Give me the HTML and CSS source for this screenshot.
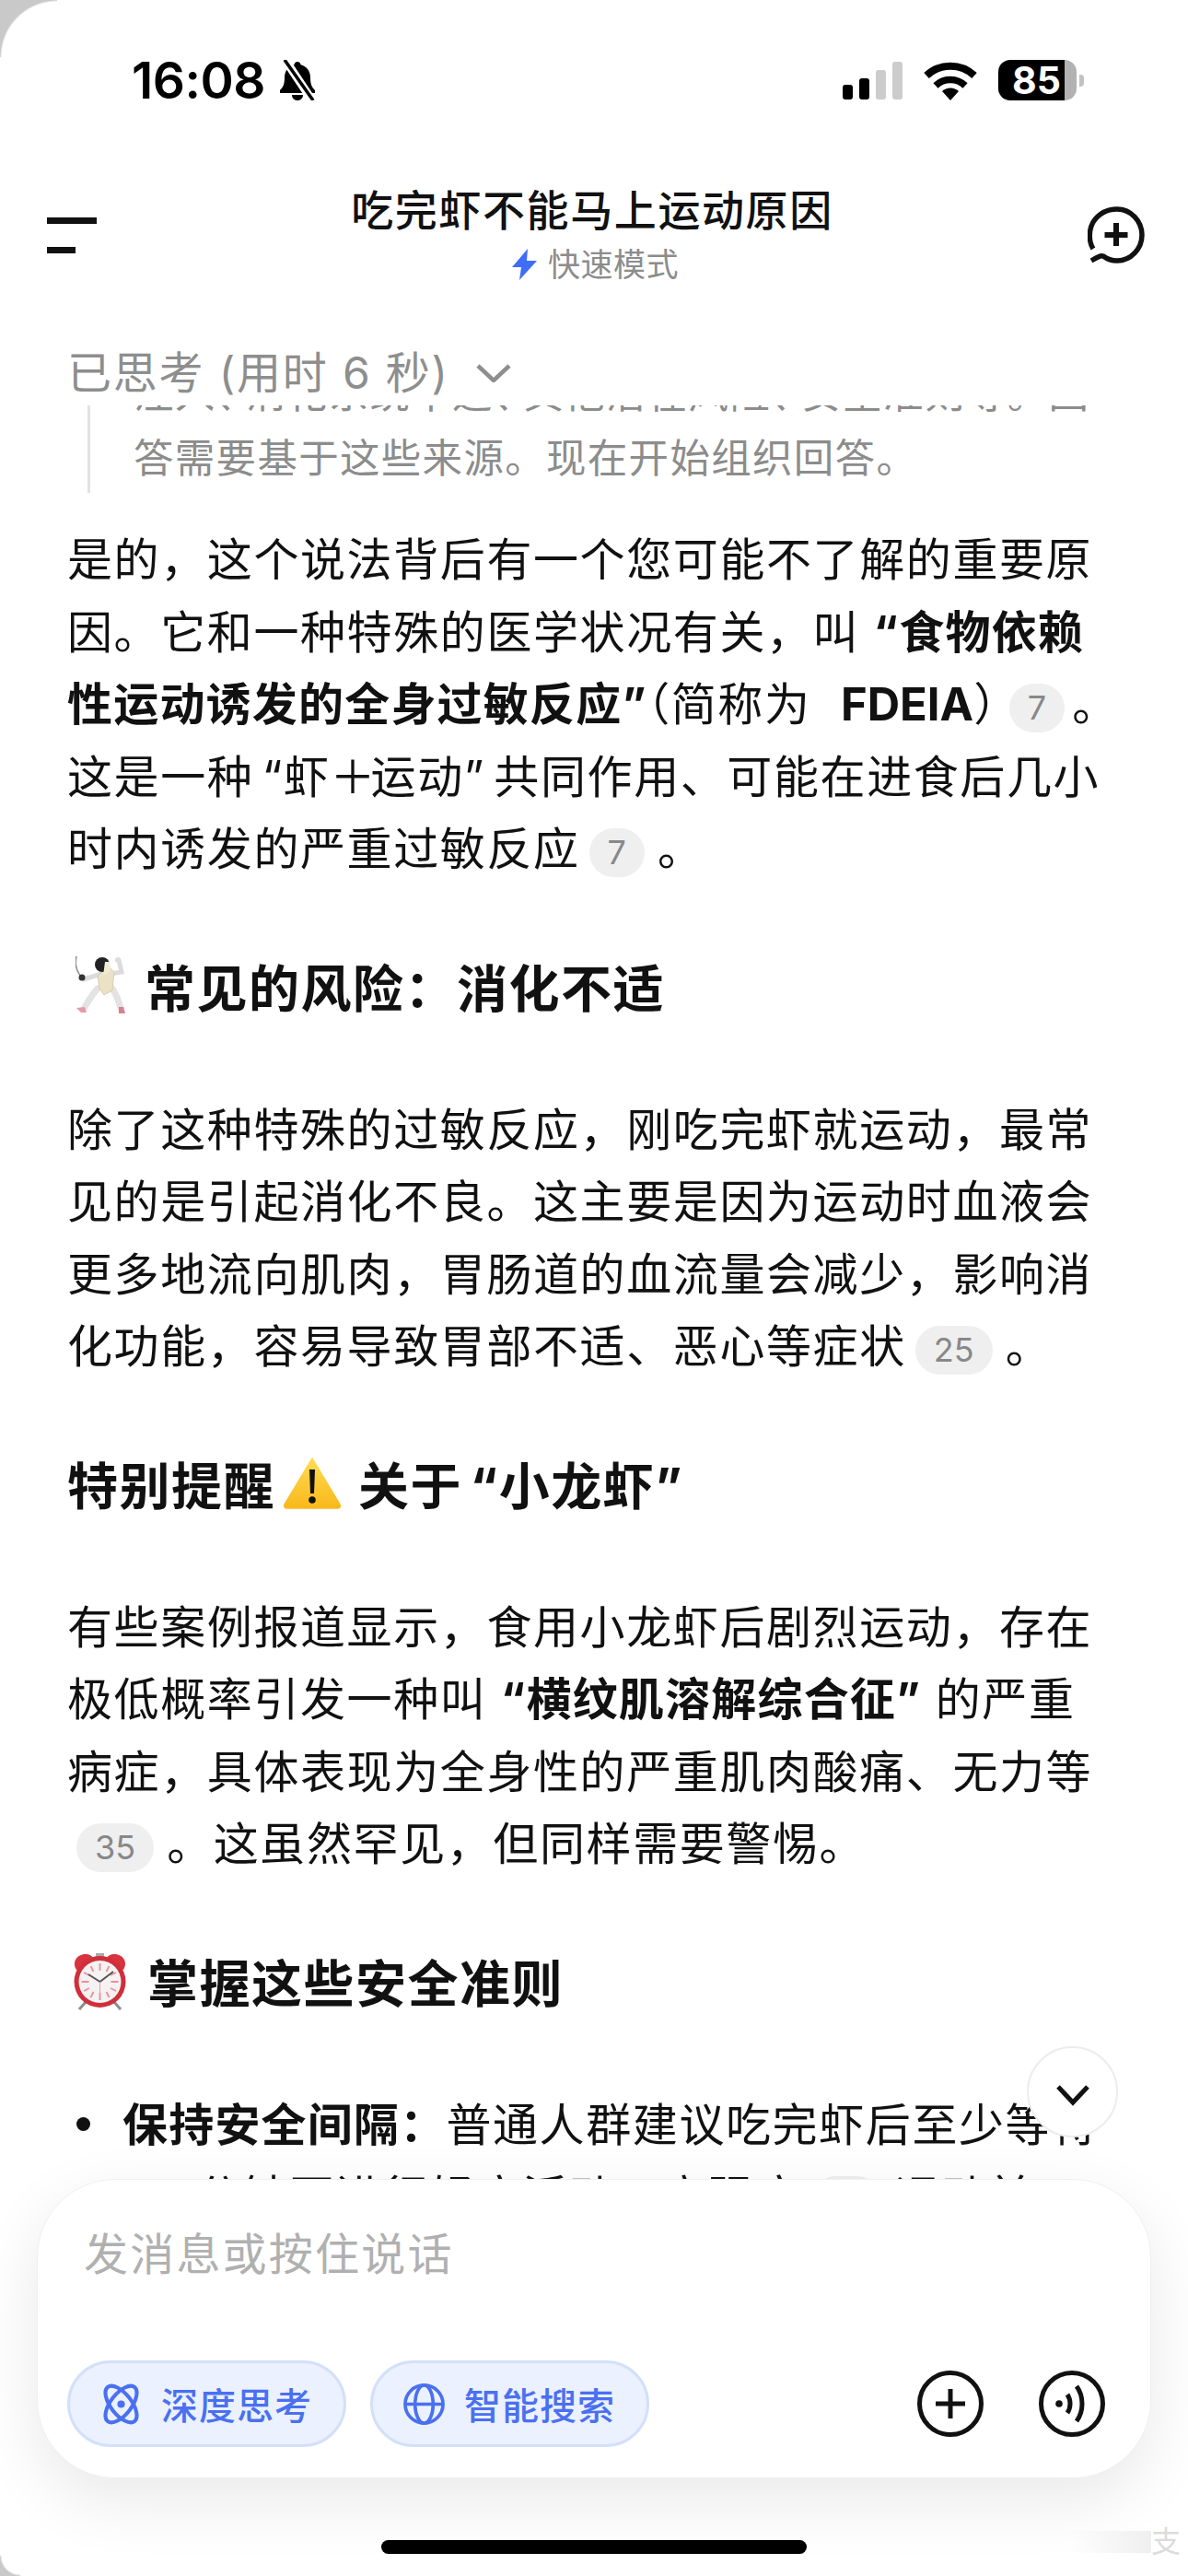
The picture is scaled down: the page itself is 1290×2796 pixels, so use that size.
FILE: index.html
```html
<!DOCTYPE html>
<html lang="zh-CN">
<head>
    <meta charset="UTF-8">
    <meta name="viewport" content="width=device-width, initial-scale=1.0">
    <title>吃完虾不能马上运动原因</title>
    <link rel="stylesheet" href="styles.css">
</head>
<body>
<div class="screen">

    <!-- status bar -->
    <div class="status">
        <div class="status-left">
            <span class="time">16:08</span>
            <svg class="bell" viewBox="0 0 44 44">
                <path d="M22 2c2 0 3.400 1.400 3.500 3.200C32 7 36 12 36 19c0 8 2 11 5 14v3H3v-3c3-3 5-6 5-14 0-7 4-12 10.500-13.800C18.600 3.400 20 2 22 2z" fill="#000"/>
                <path d="M16 38h12c0 3.500-2.500 6-6 6s-6-2.500-6-6z" fill="#000"/>
                <path d="M8 -1 40 47" stroke="#fff" stroke-width="9"/>
                <path d="M8 0 39 44" stroke="#000" stroke-width="3.500"/>
            </svg>
        </div>
        <div class="status-right">
            <div class="signal">
                <span class="bar bar-1"></span>
                <span class="bar bar-2"></span>
                <span class="bar bar-3"></span>
                <span class="bar bar-4"></span>
            </div>
            <svg class="wifi" viewBox="0 0 58 43">
                <path d="M3 16A38 38 0 0 1 55 16" fill="none" stroke="#000" stroke-width="8"/>
                <path d="M13 27A23 23 0 0 1 45 27" fill="none" stroke="#000" stroke-width="7.500"/>
                <path d="M29 43 20 33A13 13 0 0 1 38 33Z" fill="#000"/>
            </svg>
            <div class="battery">
                <div class="battery-body"><span class="battery-level">85</span></div>
                <span class="battery-nub"></span>
            </div>
        </div>
    </div>

    <!-- title bar -->
    <div class="topbar">
        <div class="menu-btn">
            <span class="menu-long"></span>
            <span class="menu-short"></span>
        </div>
        <div class="title-box">
            <div class="title">吃完虾不能马上运动原因</div>
            <div class="mode">
                <svg class="bolt" viewBox="0 0 27 34">
                    <path d="M17 0 0 20h10L8 34 27 13H16z" fill="#3f6df5"/>
                </svg>
                <span>快速模式</span>
            </div>
        </div>
        <svg class="new-chat" viewBox="0 0 62 62">
            <path d="M6 46C1 38 1 26 6 17 12 8 21 3 32 3c15 0 27 13 27 28S47 59 32 59c-7 0-11-2-15-5-3-1-8 2-13 5" fill="none" stroke="#111" stroke-width="5.500"/>
            <path d="M31 18v25M18.500 31h25" stroke="#111" stroke-width="6"/>
        </svg>
    </div>

    <!-- answer -->
    <div class="chat">
        <div class="think-head">
            <span>已思考 (用时 6 秒)</span>
            <svg class="think-arrow" viewBox="0 0 38 20">
                <path d="M2 2 19 18 36 2" fill="none" stroke="#8e8e8e" stroke-width="4.500"/>
            </svg>
        </div>
        <div class="think-quote">
            <p>注入<span class="comma">、</span>消化系统不适<span class="comma">、</span>其他潜在风险<span class="comma">、</span>安全准则等。回<br>答需要基于这些来源。现在开始组织回答。</p>
        </div>

        <p class="para first">是的，这个说法背后有一个您可能不了解的重要原<br>因。它和一种特殊的医学状况有关，叫 <b>“食物依赖<br>性运动诱发的全身过敏反应”</b>（简称为 <b class="latin">FDEIA</b>）<span class="cite cite-tight">7</span>。<br><span class="tight-line">这是一种 “虾<span class="plus">＋</span>运动” 共同作用、可能在进食后几小</span><br>时内诱发的严重过敏反应<span class="cite">7</span>。</p>

        <h2 class="heading">
            <svg class="emoji fencer" viewBox="0 0 55 64">
                <path d="M1 1C-1 9 1 17 6 23" fill="none" stroke="#8a8a8a" stroke-width="1.500"/>
                <path d="M9 26 28 20M38 20 50 18 47 5" fill="none" stroke="#dcdcdc" stroke-width="5" stroke-linecap="round"/>
                <path d="M24 36C18 42 14 50 10 56M40 36C44 42 47 50 49 57" fill="none" stroke="#e3e3e3" stroke-width="7" stroke-linecap="round"/>
                <path d="M24 22 36 12 42 18 40 38 31 43 26 36z" fill="#ebe2c6" stroke="#cfc6a8" stroke-width=".8"/>
                <circle cx="29" cy="10" r="8" fill="#222"/>
                <path d="M32 7h5l1 10-8 5z" fill="#f0ead6"/>
                <circle cx="7" cy="24" r="3.500" fill="#333"/>
                <circle cx="46" cy="5" r="3" fill="#ddd"/>
                <path d="M1 57 10 56 12 62 6 62z" fill="#e39aa8"/>
                <path d="M47 56 52 56 54 63 47 63z" fill="#d9808f"/>
            </svg>
            <span>常见的风险：消化不适</span>
        </h2>

        <p class="para">除了这种特殊的过敏反应，刚吃完虾就运动，最常<br>见的是引起消化不良。这主要是因为运动时血液会<br>更多地流向肌肉，胃肠道的血流量会减少，影响消<br>化功能，容易导致胃部不适、恶心等症状<span class="cite">25</span>。</p>

        <h2 class="heading">
            <span>特别提醒</span>
            <svg class="emoji warning" viewBox="0 0 64 57">
                <defs>
                    <linearGradient id="warnFill" x1="0" y1="0" x2="0" y2="1">
                        <stop offset="0" stop-color="#ffdc52"/>
                        <stop offset="1" stop-color="#f9b81c"/>
                    </linearGradient>
                </defs>
                <path d="M32 2 62 52c1 2 0 4-3 4H5c-3 0-4-2-3-4z" fill="url(#warnFill)" stroke="url(#warnFill)" stroke-width="1.500" stroke-linejoin="round"/>
                <path d="M29 14h6l-1 26h-4z" fill="#111"/>
                <circle cx="32" cy="47" r="3.800" fill="#111"/>
            </svg>
            <span>关于 “小龙虾”</span>
        </h2>

        <p class="para">有些案例报道显示，食用小龙虾后剧烈运动，存在<br>极低概率引发一种叫 <b>“横纹肌溶解综合征”</b> 的严重<br>病症，具体表现为全身性的严重肌肉酸痛、无力等<br><span class="cite">35</span>。这虽然罕见，但同样需要警惕。</p>

        <h2 class="heading">
            <svg class="emoji clock" viewBox="0 0 63 65">
                <path d="M7 22C0 14 6 4 16 4c4 0 7 2 8 4zM56 22c7-8 1-18-9-18-4 0-7 2-8 4z" fill="#d8333f"/>
                <path d="M16 56 9 64M47 56l7 8" stroke="#8d8d8d" stroke-width="3"/>
                <path d="M27 3h9v6h-9z" fill="#aaa"/>
                <circle cx="31.500" cy="34" r="28" fill="#cf2f3b"/>
                <circle cx="31.500" cy="34" r="23" fill="#f4f2f2"/>
                <path d="M31.500 14v8M31.500 46v8M11.500 34h8M43.500 34h8M21.500 17l3 6M41.500 17l-3 6M21.500 51l3-6M41.500 51l-3-6M14 24l6 3M49 24l-6 3M14 44l6-3M49 44l-6-3" stroke="#ee8f98" stroke-width="1.800"/>
                <path d="M31.500 34 19 26M31.500 34 46 23" stroke="#555" stroke-width="2"/>
                <path d="M31.500 34v20" stroke="#e08a92" stroke-width=".8"/>
            </svg>
            <span>掌握这些安全准则</span>
        </h2>

        <ul class="tips">
            <li><b>保持安全间隔：</b>普通人群建议吃完虾后至少等待<br>30 分钟再进行轻度活动，高强度<span class="cite">12</span>运动前</li>
        </ul>
    </div>

    <!-- scroll to bottom -->
    <div class="scroll-btn">
        <svg viewBox="0 0 38 24">
            <path d="M3 3 19 20 35 3" fill="none" stroke="#111" stroke-width="5"/>
        </svg>
    </div>

    <!-- input box -->
    <div class="composer">
        <div class="placeholder">发消息或按住说话</div>
        <div class="tools">
            <div class="pill">
                <svg class="pill-icon" viewBox="0 0 44 44">
                    <g fill="none" stroke="#4a70f1" stroke-width="4">
                        <ellipse cx="22" cy="22" rx="11" ry="23" transform="rotate(-38 22 22)"/>
                        <ellipse cx="22" cy="22" rx="11" ry="23" transform="rotate(38 22 22)"/>
                    </g>
                    <circle cx="22" cy="22" r="4" fill="#4a70f1"/>
                </svg>
                <span>深度思考</span>
            </div>
            <div class="pill">
                <svg class="pill-icon" viewBox="0 0 46 46">
                    <g fill="none" stroke="#4a70f1" stroke-width="3.800">
                        <circle cx="23" cy="23" r="21"/>
                        <ellipse cx="23" cy="23" rx="10" ry="21"/>
                        <path d="M2 23h42"/>
                    </g>
                </svg>
                <span>智能搜索</span>
            </div>
            <div class="tools-right">
                <svg class="round-icon" viewBox="0 0 72 72">
                    <circle cx="36" cy="36" r="33.500" fill="none" stroke="#111" stroke-width="5"/>
                    <path d="M36 20v32M20 36h32" stroke="#111" stroke-width="5"/>
                </svg>
                <svg class="round-icon" viewBox="0 0 72 72">
                    <circle cx="36" cy="36" r="33.500" fill="none" stroke="#111" stroke-width="5"/>
                    <circle cx="22" cy="36" r="3.800" fill="#111"/>
                    <path d="M31 26C35 32 35 40 31 46M41 17C49 28 49 44 41 55" fill="none" stroke="#111" stroke-width="5"/>
                </svg>
            </div>
        </div>
    </div>

    <div class="home-bar"></div>

    <!-- screenshot leftovers -->
    <div class="corner corner-top"></div>
    <div class="corner corner-bottom"></div>
    <div class="mark"><span class="mark-lines"></span><span class="mark-text">支</span></div>
</div>
</body>
</html>
```
FILE: styles.css
```css
* {
    box-sizing: border-box;
}

body {
    margin: 0;
    background-color: #fff;
    color: #111;
    font-family: Inter, "Noto Sans CJK SC", sans-serif;
}

.screen {
    position: relative;
    width: 1290px;
    height: 2796px;
    overflow: hidden;
    background-color: #fff;
}

/* status bar */
.status {
    display: flex;
    justify-content: space-between;
    align-items: center;
    height: 174px;
    padding: 0 113px 0 143px;
}

.status-left {
    display: flex;
    align-items: center;
    gap: 13px;
}

.time {
    font-size: 55px;
    font-weight: 600;
    color: #000;
    letter-spacing: -0.5px;
}

.bell {
    width: 44px;
    height: 44px;
}

.status-right {
    display: flex;
    align-items: center;
    gap: 23px;
}

.signal {
    display: flex;
    align-items: flex-end;
    gap: 7px;
    height: 41px;
}

.bar {
    width: 11px;
    border-radius: 3px;
    background-color: #000;
}

.bar-1 {
    height: 16px;
}

.bar-2 {
    height: 23px;
}

.bar-3 {
    height: 32px;
    background-color: #ccc;
}

.bar-4 {
    height: 41px;
    background-color: #ccc;
}

.wifi {
    width: 58px;
    height: 43px;
}

.battery {
    display: flex;
    align-items: center;
    gap: 3px;
}

.battery-body {
    width: 85px;
    height: 44px;
    border-radius: 13px;
    background: linear-gradient(90deg, #000 85%, #b2b2b2 85%);
    color: #fff;
    font-size: 41px;
    font-weight: 700;
    line-height: 44px;
    padding-left: 15px;
}

.battery-nub {
    width: 5px;
    height: 13px;
    border-radius: 0 4px 4px 0;
    background-color: #c2c2c2;
}

/* title bar */
.topbar {
    display: flex;
    justify-content: space-between;
    align-items: flex-start;
    height: 196px;
    padding: 30px 47px 0 51px;
}

.menu-btn {
    display: flex;
    flex-direction: column;
    gap: 25px;
    width: 54px;
    padding-top: 32px;
}

.menu-long {
    height: 7px;
    background-color: #111;
}

.menu-short {
    width: 31px;
    height: 7px;
    background-color: #111;
}

.title-box {
    text-align: center;
}

.title {
    font-size: 46px;
    font-weight: 500;
    line-height: 48px;
    letter-spacing: 1.600px;
}

.mode {
    display: flex;
    justify-content: center;
    align-items: center;
    gap: 12px;
    margin: 13px 0 0 7px;
    color: #8c8c8c;
    font-size: 35px;
    line-height: 44px;
    letter-spacing: .5px;
}

.bolt {
    width: 27px;
    height: 34px;
}

.new-chat {
    width: 62px;
    height: 62px;
    margin-top: 20px;
}

/* answer */
.chat {
    padding: 0 40px 0 73px;
}

.think-head {
    display: flex;
    align-items: center;
    gap: 29px;
    height: 70px;
    color: #8e8e8e;
    font-size: 48px;
    line-height: 70px;
    letter-spacing: 1.800px;
}

.think-arrow {
    width: 38px;
    height: 20px;
}

.think-quote {
    display: flex;
    align-items: flex-end;
    height: 95px;
    margin-left: 22px;
    padding: 0 0 3px 47px;
    overflow: hidden;
    border-left: 3px solid #e2e2e2;
    color: #8c8c8c;
    font-size: 43.500px;
    line-height: 70px;
    letter-spacing: 1.300px;
    white-space: nowrap;
}

.think-quote p {
    margin: 0;
}

.comma {
    letter-spacing: -11px;
}

.para {
    margin: 0;
    font-size: 49px;
    line-height: 78.500px;
    letter-spacing: 1.600px;
    white-space: nowrap;
}

.para.first {
    margin-top: 34px;
}

.para b,
.tips b {
    font-weight: 700;
    letter-spacing: 1.200px;
}

.para .latin {
    margin-left: 17px;
    letter-spacing: 0;
}

.tight-line {
    word-spacing: -6px;
}

.plus {
    letter-spacing: -5px;
}

.cite {
    display: inline-block;
    min-width: 57px;
    height: 53px;
    margin: 0 14px 0 10px;
    padding: 0 20px;
    border-radius: 27px;
    background-color: #efefef;
    color: #888;
    font-size: 36px;
    font-weight: 400;
    line-height: 53px;
    letter-spacing: 0;
    text-align: center;
    vertical-align: 1px;
}

.cite-tight {
    margin: 0 8px 0 -12px;
}

.heading {
    display: flex;
    align-items: center;
    gap: 20px;
    height: 80px;
    margin: 72px 0 74px;
    padding-bottom: 9px;
    font-size: 55px;
    font-weight: 700;
    letter-spacing: 1.500px;
    word-spacing: -6px;
    white-space: nowrap;
}

.emoji {
    flex: none;
}

.fencer {
    width: 55px;
    height: 64px;
    margin-left: 9px;
}

.warning {
    width: 64px;
    height: 57px;
    margin: 0 -2px 0 -12px;
}

.clock {
    width: 63px;
    height: 65px;
    margin-left: 4px;
}

.tips {
    margin: 0;
    padding: 0 0 0 60px;
    list-style: none;
    font-size: 49px;
    line-height: 78.500px;
    letter-spacing: 1.600px;
    white-space: nowrap;
}

.tips li {
    position: relative;
}

.tips li::before {
    content: "";
    position: absolute;
    top: 30px;
    left: -50px;
    width: 15px;
    height: 15px;
    border-radius: 50%;
    background-color: #111;
}

/* floating parts */
.scroll-btn {
    position: absolute;
    top: 2221px;
    left: 1115px;
    display: flex;
    justify-content: center;
    align-items: center;
    width: 99px;
    height: 99px;
    border: 2px solid #ececec;
    border-radius: 50%;
    background-color: #fff;
}

.scroll-btn svg {
    width: 38px;
    height: 24px;
    margin-top: 6px;
}

.composer {
    position: absolute;
    top: 2365px;
    left: 40px;
    display: flex;
    flex-direction: column;
    justify-content: space-between;
    width: 1210px;
    height: 325px;
    padding: 46px 49px 33px 32px;
    border: 1px solid #f0f0f0;
    border-radius: 85px;
    background-color: #fff;
    box-shadow: 0 24px 70px rgba(0, 0, 0, .09);
}

.placeholder {
    padding-left: 18px;
    color: #b0b0b0;
    font-size: 48px;
    line-height: 70px;
    letter-spacing: 2.200px;
}

.tools {
    display: flex;
    align-items: center;
    gap: 26px;
}

.pill {
    display: flex;
    align-items: center;
    gap: 21px;
    width: 303px;
    height: 94px;
    padding-left: 33px;
    border: 3px solid #d3e0fa;
    border-radius: 47px;
    background-color: #ebf1fe;
    color: #4a70f1;
    font-size: 40px;
    font-weight: 500;
    letter-spacing: 1px;
}

.pill-icon {
    width: 45px;
    height: 45px;
}

.tools-right {
    display: flex;
    align-items: center;
    gap: 60px;
    margin-left: auto;
}

.round-icon {
    width: 72px;
    height: 72px;
}

.home-bar {
    position: absolute;
    top: 2757px;
    left: 414px;
    width: 462px;
    height: 15px;
    border-radius: 8px;
    background-color: #000;
}

/* gray corners of the photo */
.corner {
    position: absolute;
    left: 0;
}

.corner-top {
    top: 0;
    width: 62px;
    height: 62px;
    background: radial-gradient(circle at 100% 100%, transparent 60px, #c9c9c9 62px);
}

.corner-bottom {
    bottom: 0;
    width: 22px;
    height: 22px;
    background: radial-gradient(circle at 100% 0, transparent 20px, #c9c9c9 22px);
}

.mark {
    position: absolute;
    right: 8px;
    bottom: 20px;
    display: flex;
    align-items: center;
}

.mark-lines {
    width: 90px;
    height: 24px;
    background: linear-gradient(90deg, rgba(235, 235, 235, 0), #efefef);
}

.mark-text {
    color: #dcdcdc;
    font-size: 32px;
    line-height: 34px;
}
```
